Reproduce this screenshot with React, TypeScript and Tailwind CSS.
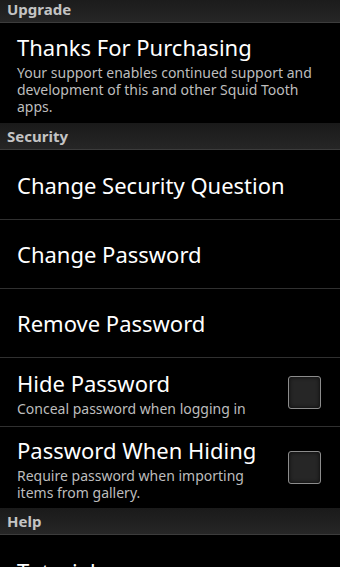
const Header = ({ label }: { label: string }) => (
  <div className="h-[27px] flex items-end pb-[5px] pl-[7px] bg-gradient-to-b from-[#1a1a1a] to-[#262626] border-b border-[#3c3c3c]">
    <span className="text-[15px] leading-none font-bold text-[#c4c4c4]">{label}</span>
  </div>
);

const CheckBox = () => (
  <div className="w-[33px] h-[33px] rounded-[3px] border-[1.5px] border-[#8c8c8c] bg-[#262626] shadow-[inset_0_0_4px_rgba(0,0,0,0.8)]" />
);

const Row = ({
  title,
  summary,
  check,
  divider = true,
  height,
}: {
  title: string;
  summary?: string;
  check?: boolean;
  divider?: boolean;
  height: string;
}) => (
  <div className={`flex items-center pl-[17px] pr-[19px] ${height} ${divider ? 'border-b border-[#303030]' : ''}`}>
    <div className="flex-1 min-w-0">
      <div className="text-[22px] leading-[30px] text-white">{title}</div>
      {summary && <div className="mt-[2px] text-[14px] leading-[17px] text-[#bdbdbd] pr-[6px]">{summary}</div>}
    </div>
    {check && <CheckBox />}
  </div>
);

export default function App() {
  return (
    <div className="w-[340px] h-[567px] overflow-hidden bg-black font-['Noto_Sans',sans-serif]">
      <div className="-mt-[4px]">
        <Header label="Upgrade" />
        <Row
          height="h-[100px]"
          divider={false}
          title="Thanks For Purchasing"
          summary="Your support enables continued support and development of this and other Squid Tooth apps."
        />
        <Header label="Security" />
        <Row height="h-[70px]" title="Change Security Question" />
        <Row height="h-[69px]" title="Change Password" />
        <Row height="h-[69px]" title="Remove Password" />
        <Row height="h-[69px]" title="Hide Password" summary="Conceal password when logging in" check />
        <Row
          height="h-[81px]"
          divider={false}
          title="Password When Hiding"
          summary="Require password when importing items from gallery."
          check
        />
        <Header label="Help" />
        <Row height="h-[72px]" title="Tutorial" />
      </div>
    </div>
  );
}
